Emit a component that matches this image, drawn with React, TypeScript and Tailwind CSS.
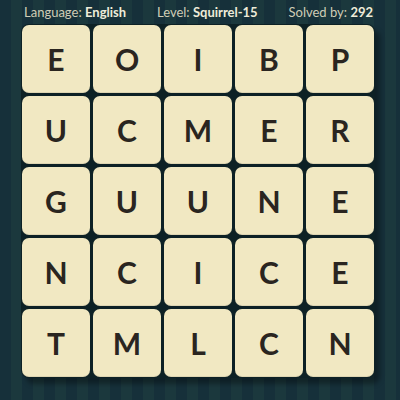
const rows = [
  ['E', 'O', 'I', 'B', 'P'],
  ['U', 'C', 'M', 'E', 'R'],
  ['G', 'U', 'U', 'N', 'E'],
  ['N', 'C', 'I', 'C', 'E'],
  ['T', 'M', 'L', 'C', 'N'],
]

function Stat({ label, value }: { label: string; value: string }) {
  return (
    <span className="text-[#cfcdb6]">
      {label}: <span className="font-bold text-[#eeecd9]">{value}</span>
    </span>
  )
}

export default function App() {
  return (
    <div
      className="w-[400px] h-[400px] overflow-hidden bg-[repeating-linear-gradient(90deg,#16303a_0px,#16303a_11px,#1b383d_11px,#1b383d_22px)]"
      style={{ fontFamily: 'Lato, "Open Sans", sans-serif' }}
    >
      {/* Header stats */}
      <div className="h-[24px] flex items-center justify-between pl-[24px] pr-[27px] text-[13px] leading-none">
        <Stat label="Language" value="English" />
        <Stat label="Level" value="Squirrel-15" />
        <Stat label="Solved by" value="292" />
      </div>

      {/* Letter grid */}
      <div className="ml-[21px] w-fit p-px bg-[#0d2125] rounded-[8px] shadow-[5px_6px_5px_rgba(0,0,0,0.35)]">
        <div className="grid grid-cols-5 gap-[3px]">
          {rows.flat().map((ch, i) => (
            <div
              key={i}
              className="w-[68px] h-[68px] rounded-[7px] bg-[#f1e8c2] flex items-center justify-center text-[30px] font-bold text-[#2a2520] shadow-[inset_0_-1px_0_rgba(0,0,0,0.08)]"
            >
              {ch}
            </div>
          ))}
        </div>
      </div>
    </div>
  )
}
